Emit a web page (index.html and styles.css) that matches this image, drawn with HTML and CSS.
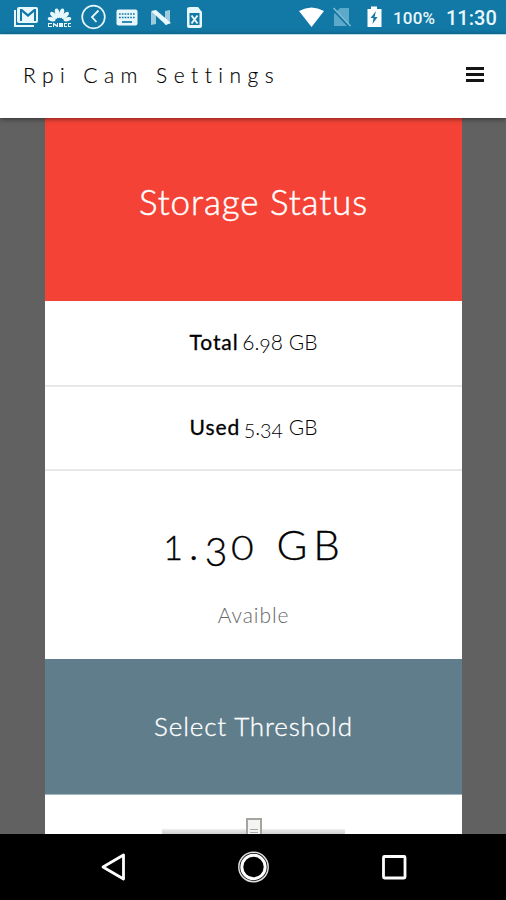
FILE: index.html
```html
<!DOCTYPE html>
<html lang="en">
<head>
<meta charset="utf-8">
<title>Rpi Cam Settings</title>
<link rel="stylesheet" href="styles.css">
</head>
<body>
<div class="screen">
  <div class="statusbar">
    <svg class="status-icons" width="210" height="34" viewBox="0 0 210 34" fill="#e8f7fc">
      <path d="M14 10v17h20v-2H16V10z"/>
      <path fill-rule="evenodd" d="M19 7h17q2 0 2 2v12q0 2-2 2H19q-2 0-2-2V9q0-2 2-2zm1 2v12h2v-9l6 5 6-5v9h2V9h-2l-6 5-6-5z"/>
      <g transform="translate(59.500 21)">
        <ellipse cx="0" cy="-8" rx="2.300" ry="5" transform="rotate(-15)"/>
        <ellipse cx="0" cy="-8" rx="2.300" ry="5" transform="rotate(15)"/>
        <ellipse cx="0" cy="-8" rx="2.200" ry="4.500" transform="rotate(-46)"/>
        <ellipse cx="0" cy="-8" rx="2.200" ry="4.500" transform="rotate(46)"/>
        <ellipse cx="0" cy="-8" rx="2" ry="4" transform="rotate(-77)"/>
        <ellipse cx="0" cy="-8" rx="2" ry="4" transform="rotate(77)"/>
      </g>
      <path d="M48 23h4v1h-3v2h3v1h-4zm5 0h1l3 2v-2h1v4h-1l-3-2v2h-1zm6 0h4v4h-4zm5 0h3v1h-2v2h2v1h-3zm4 0h3v1h-2v2h2v1h-3z"/>
      <circle cx="93.500" cy="17" r="11.300" fill="none" stroke="#e8f7fc" stroke-width="1.700"/>
      <path d="M98.500 10.500 92 17l4.500 5" fill="none" stroke="#e8f7fc" stroke-width="1.800"/>
      <rect x="116.500" y="9.500" width="21" height="16" rx="2"/>
      <path d="M119 14h16M119 17.500h16" stroke="#1278a5" stroke-width="1.500" stroke-dasharray="1.700 1.100"/>
      <path d="M122 22h10" stroke="#1278a5" stroke-width="1.700"/>
      <path opacity=".65" d="M151 12l5-1v13l-5 1zm14-1 5-1v13l-5 2z"/>
      <path d="M151 11l5-1 15 13-5 2z"/>
      <path fill-rule="evenodd" d="M190 7h8l4 5v14q0 2-2 2h-11q-2 0-2-2V9q0-2 3-2zm-.500 6v12h10V13z"/>
      <path d="m191.500 15.500 6 8m0-8-6 8" stroke="#e8f7fc" stroke-width="2"/>
    </svg>
    <div class="status-right">
      <svg width="100" height="34" viewBox="290 0 100 34">
        <path d="M299 11q12.500-7 25 0l-12.500 16z" fill="#fff"/>
        <path d="M340 8h9v18h-15v-12z" fill="#5ca9c9"/>
        <path d="m332 8 18 19" stroke="#1278a5" stroke-width="3"/>
        <path d="m333.500 8 17 18" stroke="#83bed6" stroke-width="1.500"/>
        <path d="M368 9h3V6.500h6V9h4.500v18h-14V9z" fill="#fff"/>
        <path d="m376 11-5.500 7h3l-1 6 5-7h-3z" fill="#1278a5"/>
      </svg>
      <span class="battery">100%</span>
      <span class="clock">11:30</span>
    </div>
  </div>
  <header class="appbar">
    <h1>Rpi Cam Settings</h1>
    <div class="menu"><i></i><i></i><i></i></div>
  </header>
  <main class="content">
    <section class="card">
      <div class="title">Storage Status</div>
      <div class="row total"><b>Total</b> <span>6.<span class="low">9</span>8 GB</span></div>
      <div class="row used"><b>Used</b> <span><span class="low">5</span>.<span class="low">34</span> GB</span></div>
      <div class="available">
        <div class="amount"><span class="small one">1</span>.<span class="low">3</span><span class="small zero">0</span> GB</div>
        <div class="caption">Avaible</div>
      </div>
      <div class="threshold"><span>Select Threshold</span></div>
      <div class="slider">
        <div class="track"></div>
        <div class="thumb"></div>
      </div>
    </section>
  </main>
  <nav class="navbar">
    <svg width="506" height="66" viewBox="0 0 506 66" fill="none" stroke="#fff">
      <path d="M103 33 123.500 21v24z" stroke-width="2.800" stroke-linejoin="round"/>
      <circle cx="253.500" cy="33" r="14.700" stroke="#ddd" stroke-width="1.500"/>
      <circle cx="253.500" cy="33" r="11.700" stroke-width="3"/>
      <rect x="383.500" y="22.500" width="21.500" height="21.500" rx="1" stroke-width="2.800"/>
    </svg>
  </nav>
</div>
</body>
</html>
```
FILE: styles.css
```css
* { box-sizing: border-box; }
body { margin: 0; font-family: Lato, "Open Sans", sans-serif; font-weight: 300; }
.screen { width: 506px; height: 900px; display: flex; flex-direction: column; overflow: hidden; background: #616161; }
.statusbar { height: 34px; flex: none; display: flex; justify-content: space-between; background: #1278a5; color: #e8f7fc; font-family: Roboto, sans-serif; font-weight: 500; }
.statusbar svg { display: block; flex: none; }
.status-right { display: flex; width: 216px; line-height: 36px; white-space: nowrap; }
.battery { font-size: 17px; margin-left: 3px; width: 53px; letter-spacing: .2px; }
.clock { font-size: 20px; }
.appbar { height: 84px; flex: none; display: flex; justify-content: space-between; align-items: center; padding: 0 22px 5px 23px; background: #fff; border-top: 1px solid #b5dded; box-shadow: 0 1px 5px rgba(0,0,0,.5); z-index: 1; }
.appbar h1 { margin: 0; font-size: 21px; font-weight: 300; letter-spacing: 6.450px; white-space: nowrap; -webkit-text-stroke: .15px #000; }
.menu { display: flex; flex-direction: column; gap: 3px; width: 18px; }
.menu i { height: 3px; background: #151515; }
.content { flex: 1; min-height: 0; overflow: hidden; padding: 0 44px 0 45px; }
.card { background: #fff; text-align: center; color: #000; }
.title { height: 183px; line-height: 167px; background: #f44336; color: #fff; font-size: 35px; letter-spacing: .9px; -webkit-text-stroke: .5px #fff; }
.row { font-size: 21px; white-space: nowrap; border-bottom: 2px solid #e8e8e8; }
.row b { font-weight: 400; -webkit-text-stroke: .3px #000; letter-spacing: .9px; margin-right: -2px; }
.total { height: 86px; line-height: 82px; }
.used { height: 84px; line-height: 80px; }
.low { display: inline-block; line-height: 1; vertical-align: -.14em; font-size: .94em; }
.available { height: 188px; padding-top: 46px; }
.amount { height: 54px; line-height: 54px; font-size: 42px; letter-spacing: 6px; margin-right: -2px; -webkit-text-stroke: .3px #000; }
.small { display: inline-block; line-height: 1; font-size: 34px; }
.amount .low { font-size: 39px; vertical-align: -6px; }
.zero { transform: scaleX(1.150); }
.caption { margin-top: 30px; line-height: 28px; font-size: 21px; color: #666; letter-spacing: .9px; }
.threshold { height: 136px; line-height: 134px; background: #607d8b; color: #fff; font-size: 26px; letter-spacing: .85px; -webkit-text-stroke: .35px #fff; border-bottom: 1px solid #a7b7c0; }
.slider { height: 60px; padding-top: 23px; display: grid; justify-items: center; }
.track { grid-area: 1 / 1; width: 183px; height: 12px; margin-top: 11px; background: linear-gradient(#eee, #d4d4d4 4px); }
.thumb { grid-area: 1 / 1; width: 16px; height: 26px; border: 2px solid #a3a5a1; background: linear-gradient(#aaa, #aaa) 50% 9px / 8px 1px no-repeat, linear-gradient(#aaa, #aaa) 50% 12px / 8px 1px no-repeat, #f4f5f2; }
.navbar { height: 66px; flex: none; background: #000; }
.navbar svg { display: block; }
```
